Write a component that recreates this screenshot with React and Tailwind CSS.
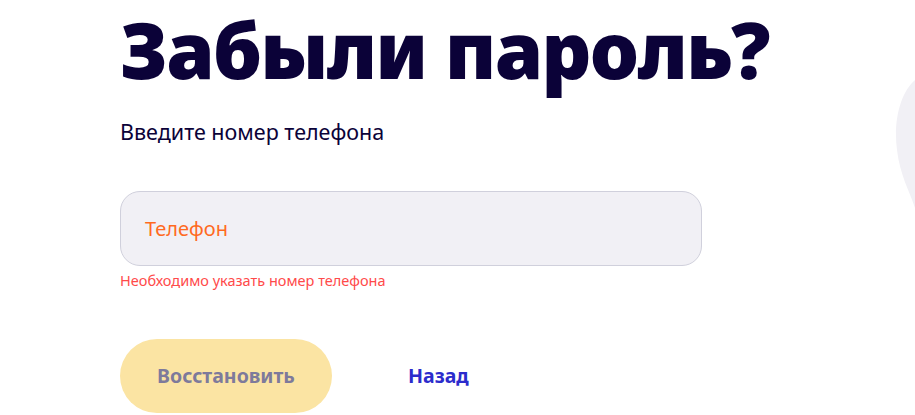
export default function App() {
  return (
    <div className="relative w-[915px] h-[415px] overflow-hidden bg-white" style={{ fontFamily: '"Noto Sans", "Open Sans", sans-serif' }}>
      <svg className="absolute right-0 top-[80px]" width="20" height="130" viewBox="0 0 20 130">
        <path d="M20 0 C 6 12, -2 40, 2 70 C 5 95, 14 110, 20 128 Z" fill="#f1f0f5" />
      </svg>
      <div className="relative flex flex-col pl-[120px] pt-[1px]">
        <h1 className="text-[78px] leading-[96px] font-black text-[#0b0238] tracking-[-1.6px]">Забыли пароль?</h1>
        <p className="mt-[23px] text-[21.5px] leading-[24px] text-[#0b0238]">Введите номер телефона</p>
        <div className="mt-[47px] w-[582px] h-[75px] rounded-[20px] border border-[#d0d0dc] bg-[#f1f0f5] flex items-center px-[24px]">
          <span className="text-[20px] text-[#ff6a1f]">Телефон</span>
        </div>
        <p className="mt-[5px] text-[14.5px] leading-[18px] text-[#ff4a4a]">Необходимо указать номер телефона</p>
        <div className="mt-[50px] flex items-center">
          <button className="w-[212px] h-[74px] rounded-full bg-[#fbe4a3] text-[19.5px] font-bold text-[#7e7a9b]">Восстановить</button>
          <button className="ml-[76px] text-[19.5px] font-bold text-[#2c2ccc]">Назад</button>
        </div>
      </div>
    </div>
  );
}
